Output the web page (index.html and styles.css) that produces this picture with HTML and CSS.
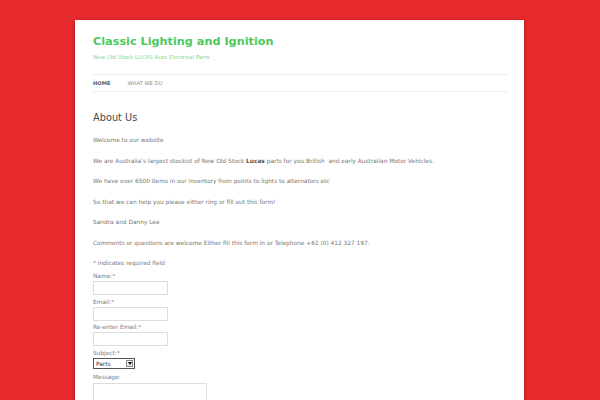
FILE: index.html
```html
<!DOCTYPE html>
<html>
<head>
<meta charset="utf-8">
<link rel="stylesheet" href="styles.css">
</head>
<body>
<div class="site">
  <header class="masthead">
    <h1 class="site-title">Classic Lighting and Ignition</h1>
    <p class="site-desc">New Old Stock LUCAS Auto Electrical Parts</p>
    <nav class="nav">
      <a class="nav-item current">HOME</a>
      <a class="nav-item">WHAT WE DO</a>
    </nav>
  </header>
  <main class="content">
    <h2 class="page-title">About Us</h2>
    <p>Welcome to our website</p>
    <p>We are Australia’s largest stockist of New Old Stock <b>Lucas</b> parts for you British&nbsp; and early Australian Motor Vehicles.</p>
    <p>We have over 6500 items in our inventory from points to lights to alternators etc</p>
    <p>So that we can help you please either ring or fill out this form!</p>
    <p>Sandra and Danny Lee</p>
    <p>Comments or questions are welcome Either fill this form in or Telephone +61 (0) 412 327 197.</p>
    <form class="form">
      <div class="req">* indicates required field</div>
      <label class="lbl">Name:*</label>
      <div class="field"></div>
      <label class="lbl">Email:*</label>
      <div class="field"></div>
      <label class="lbl">Re-enter Email:*</label>
      <div class="field"></div>
      <label class="lbl">Subject:*</label>
      <div class="select"><span class="sel-text">Parts</span><span class="sel-btn"><svg width="4" height="3" viewBox="0 0 4 3"><path d="M0 0h4L2 3z" fill="#000"/></svg></span></div>
      <label class="lbl msg">Message:</label>
      <div class="area"></div>
    </form>
  </main>
</div>
</body>
</html>
```
FILE: styles.css
```css
html, body {
  margin: 0;
  padding: 0;
}
body {
  background: #e5292c;
  font-family: "DejaVu Sans", sans-serif;
  height: 400px;
  overflow: hidden;
}
.site {
  margin: 20px 0 0 75px;
  width: 449px;
  height: 380px;
  overflow: hidden;
  background: #fff;
  box-shadow: 0 1px 3px rgba(0,0,0,0.35);
  padding: 0 16px 0 18px;
  box-sizing: border-box;
}
.masthead {
  padding-top: 15px;
}
.site-title {
  margin: 0;
  font-size: 11.25px;
  font-weight: bold;
  color: #4dc95c;
  line-height: 14px;
}
.site-desc {
  margin: 4px 0 0;
  font-size: 5.5px;
  color: #86d891;
  line-height: 8px;
}
.nav {
  margin-top: 13px;
  border-top: 1px solid #ededed;
  border-bottom: 1px solid #ededed;
  height: 16px;
  display: flex;
  align-items: center;
  gap: 17px;
}
.nav-item {
  font-size: 5.2px;
  color: #8a8a8a;
}
.nav-item.current {
  font-weight: bold;
  color: #5c5c5c;
}
.content {
  padding-top: 19px;
  color: #777;
}
.page-title {
  margin: 0;
  font-size: 9.8px;
  font-weight: normal;
  color: #4a4a4a;
  line-height: 14px;
}
.content p {
  margin: 0;
  font-size: 5.85px;
  line-height: 20.55px;
}
.content p:first-of-type {
  margin-top: 5px;
}
.content b {
  color: #555;
}
.form {
  font-size: 5.85px;
  color: #7a7a7a;
  display: flex;
  flex-direction: column;
  align-items: flex-start;
}
.req {
  margin-top: 6px;
  line-height: 8px;
}
.lbl {
  margin-top: 5px;
  line-height: 8px;
}
.field + .lbl {
  margin-top: 3px;
}
.field {
  width: 73px;
  height: 12px;
  border: 1px solid #ddd;
  margin-top: 1px;
}
.field:nth-of-type(3) + .lbl {
  margin-top: 2px;
}
.select {
  margin-top: 1px;
  width: 40px;
  height: 9px;
  border: 1px solid #555;
  display: flex;
  align-items: center;
  font-size: 5.85px;
  color: #333;
}
.lbl.msg {
  margin-top: 4px;
}
.sel-text {
  flex: 1;
  padding-left: 2px;
}
.sel-btn {
  width: 7px;
  height: 7px;
  border: 1px solid #888;
  background: #eee;
  margin-right: 1px;
  display: flex;
  align-items: center;
  justify-content: center;
  box-sizing: border-box;
}
.area {
  margin-top: 2px;
  width: 112px;
  height: 40px;
  border: 1px solid #ddd;
}
```
